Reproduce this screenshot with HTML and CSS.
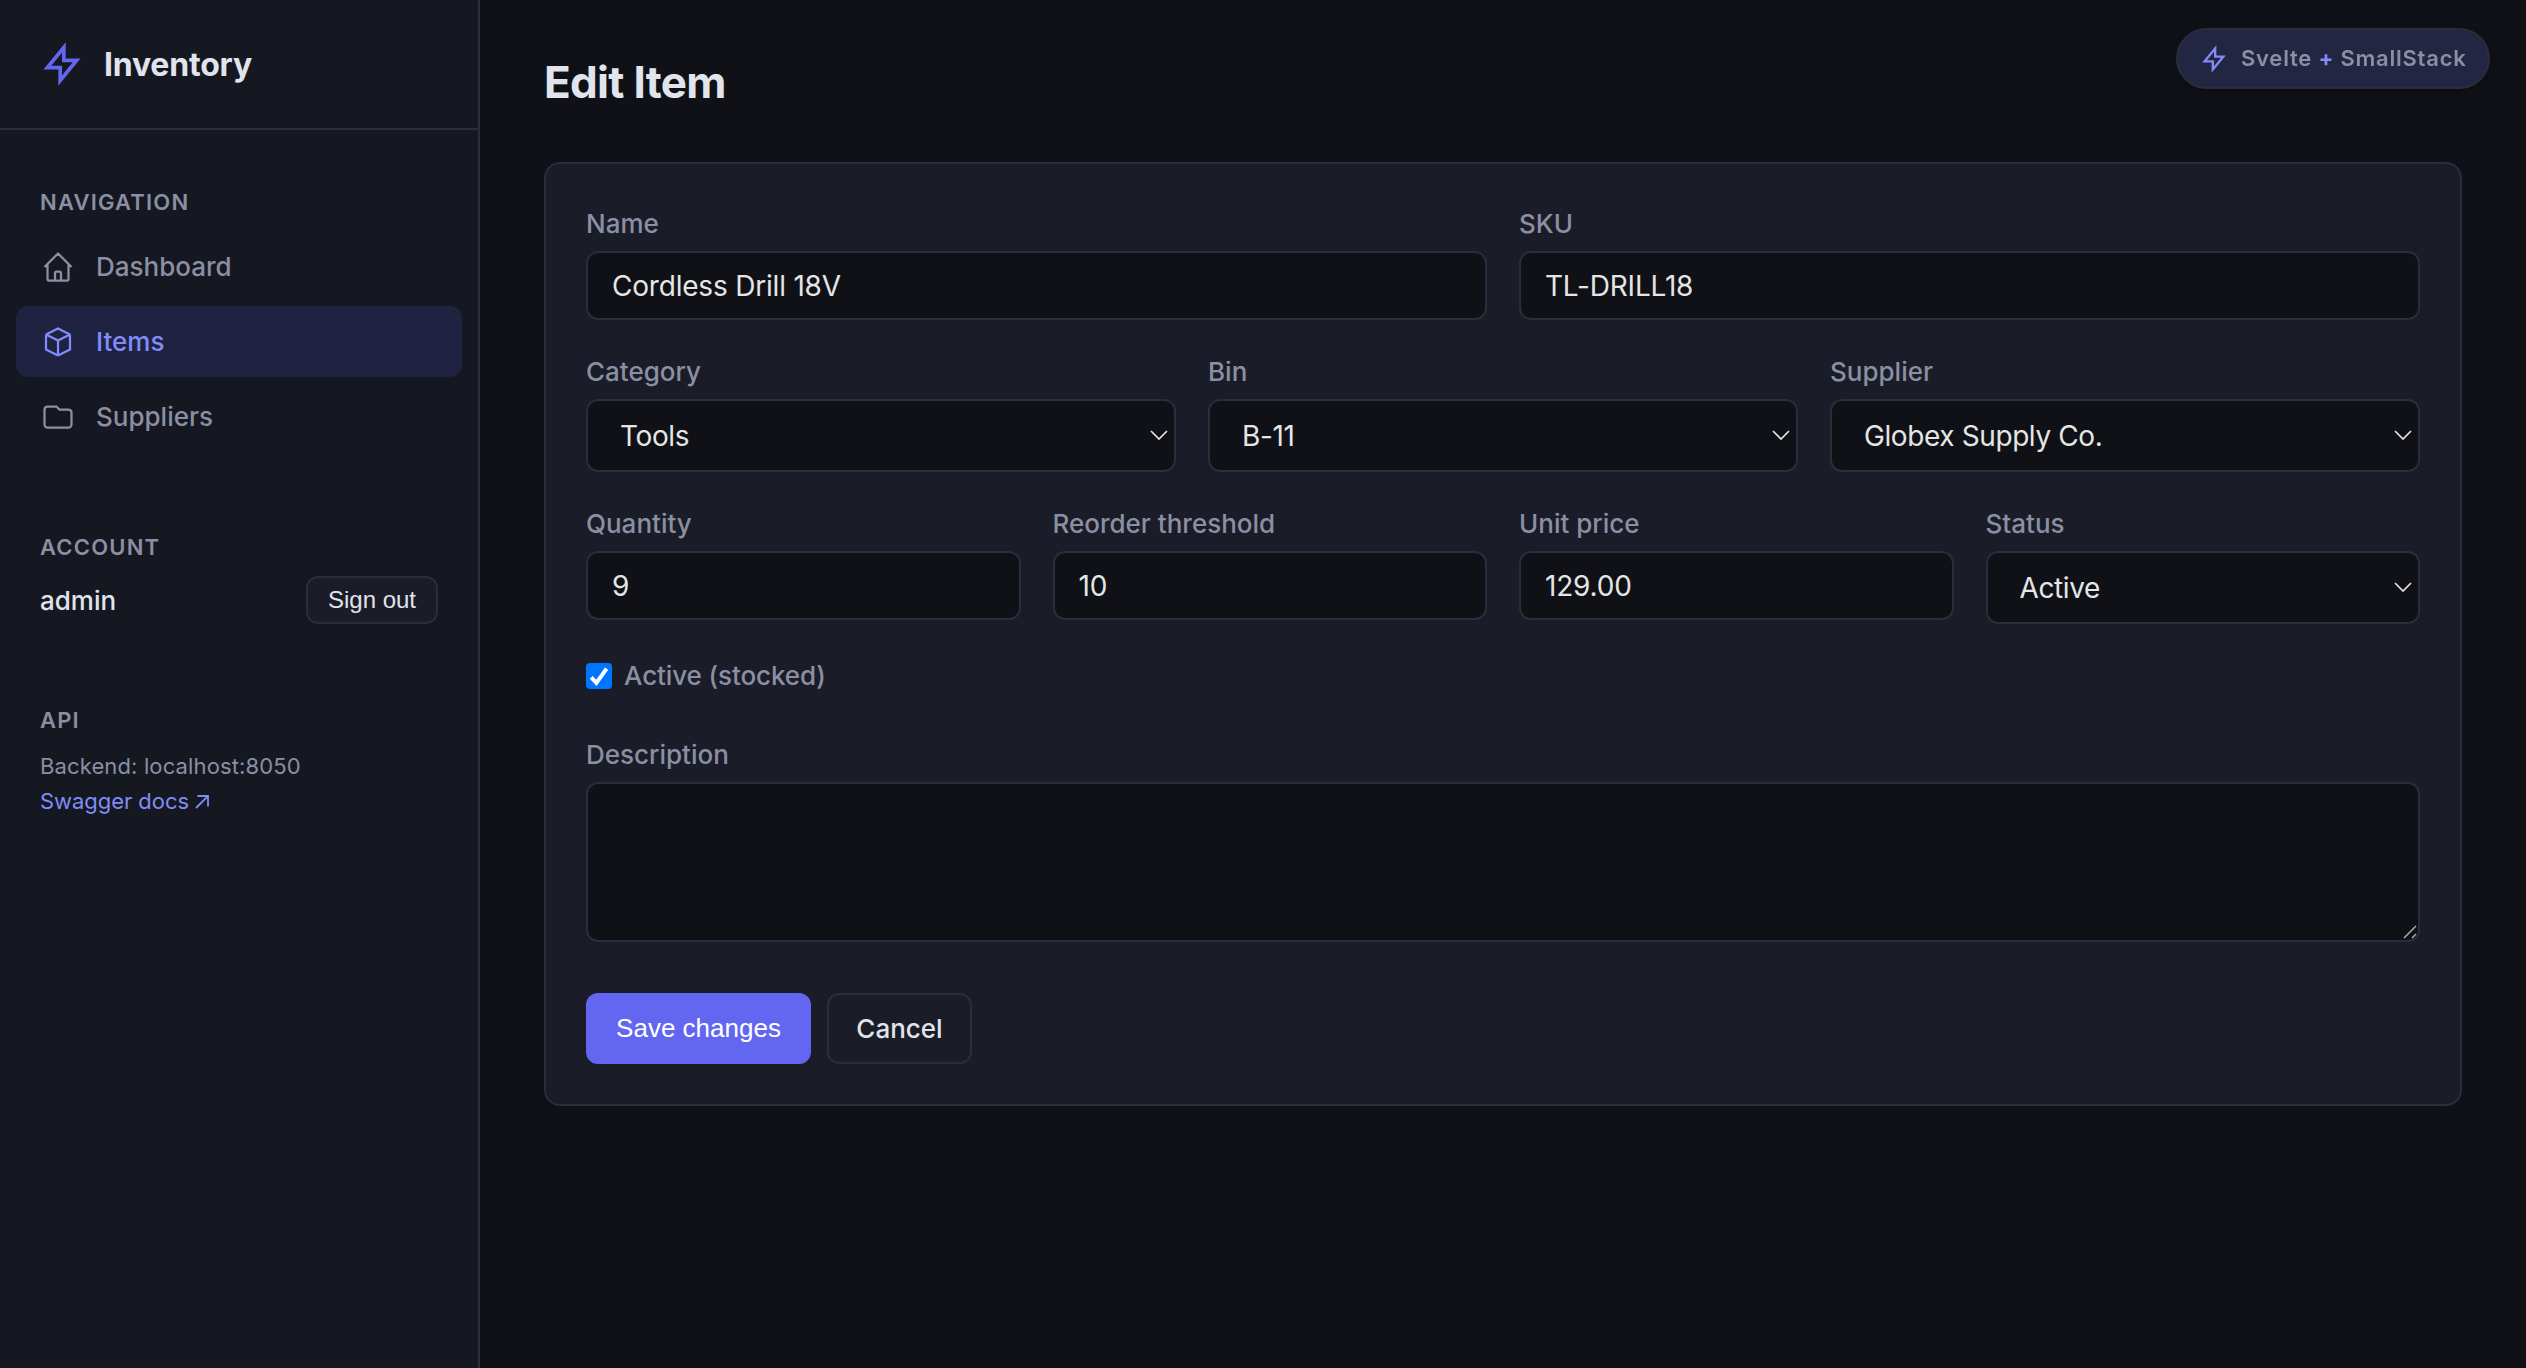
FILE: index.html
```html
<!DOCTYPE html>
<html lang="en">
  <head>
    <meta charset="UTF-8" />
    <meta name="viewport" content="width=device-width, initial-scale=1" />
    <title>Edit Item - Inventory</title>
    <link rel="stylesheet" href="styles.css">
  </head>
  <body>
    <!-- Sidebar -->
    <aside class="sidebar">
      <div class="sidebar-header">
        <svg class="logo-icon" viewBox="0 0 24 24" fill="none" stroke="currentColor" stroke-width="2">
          <path d="M13 10V3L4 14h7v7l9-11h-7z" />
        </svg>
        <span class="logo-text">Inventory</span>
      </div>

      <nav class="sidebar-section">
        <div class="section-label">Navigation</div>
        <a class="nav-item" href="#">
          <svg viewBox="0 0 24 24" fill="none" stroke="currentColor" stroke-width="1.5">
            <path d="M3 12l2-2m0 0l7-7 7 7M5 10v10a1 1 0 001 1h3m10-11l2 2m-2-2v10a1 1 0 01-1 1h-3m-6 0a1 1 0 001-1v-4a1 1 0 011-1h2a1 1 0 011 1v4a1 1 0 001 1m-6 0h6" />
          </svg>
          Dashboard
        </a>
        <a class="nav-item active" href="#">
          <svg viewBox="0 0 24 24" fill="none" stroke="currentColor" stroke-width="1.5">
            <path d="M20 7l-8-4-8 4m16 0l-8 4m8-4v10l-8 4m0-10L4 7m8 4v10M4 7v10l8 4" />
          </svg>
          Items
        </a>
        <a class="nav-item" href="#">
          <svg viewBox="0 0 24 24" fill="none" stroke="currentColor" stroke-width="1.5">
            <path d="M3 7v10a2 2 0 002 2h14a2 2 0 002-2V9a2 2 0 00-2-2h-6l-2-2H5a2 2 0 00-2 2z" />
          </svg>
          Suppliers
        </a>
      </nav>

      <div class="sidebar-section account">
        <div class="section-label">Account</div>
        <div class="account-row">
          <span class="username">admin</span>
          <button type="button" class="btn-small">Sign out</button>
        </div>
      </div>

      <div class="sidebar-section api">
        <div class="section-label">API</div>
        <div class="api-info">Backend: localhost:8050</div>
        <a class="api-link" href="#">Swagger docs
          <svg viewBox="0 0 14 14" fill="none" stroke="currentColor" stroke-width="1.8">
            <path d="M1 13L12.4 1.6M2.5 1h10.5v10.5" />
          </svg>
        </a>
      </div>
    </aside>

    <!-- Stack badge, top right -->
    <div class="stack-badge">
      <svg viewBox="0 0 24 24" fill="none" stroke="currentColor" stroke-width="2">
        <path d="M13 10V3L4 14h7v7l9-11h-7z" />
      </svg>
      <span>Svelte <b>+</b> SmallStack</span>
    </div>

    <!-- Edit form -->
    <main class="content">
      <h1>Edit Item</h1>

      <form class="card">
        <div class="form-row cols-2">
          <div class="field">
            <label for="name">Name</label>
            <input type="text" id="name" value="Cordless Drill 18V" />
          </div>
          <div class="field">
            <label for="sku">SKU</label>
            <input type="text" id="sku" value="TL-DRILL18" />
          </div>
        </div>

        <div class="form-row cols-3">
          <div class="field">
            <label for="category">Category</label>
            <div class="select">
              <select id="category"><option>Tools</option></select>
              <svg viewBox="0 0 18 10"><path d="M1 1l8 8 8-8" /></svg>
            </div>
          </div>
          <div class="field">
            <label for="bin">Bin</label>
            <div class="select">
              <select id="bin"><option>B-11</option></select>
              <svg viewBox="0 0 18 10"><path d="M1 1l8 8 8-8" /></svg>
            </div>
          </div>
          <div class="field">
            <label for="supplier">Supplier</label>
            <div class="select">
              <select id="supplier"><option>Globex Supply Co.</option></select>
              <svg viewBox="0 0 18 10"><path d="M1 1l8 8 8-8" /></svg>
            </div>
          </div>
        </div>

        <div class="form-row cols-4">
          <div class="field">
            <label for="quantity">Quantity</label>
            <input type="text" id="quantity" value="9" />
          </div>
          <div class="field">
            <label for="threshold">Reorder threshold</label>
            <input type="text" id="threshold" value="10" />
          </div>
          <div class="field">
            <label for="price">Unit price</label>
            <input type="text" id="price" value="129.00" />
          </div>
          <div class="field">
            <label for="status">Status</label>
            <div class="select">
              <select id="status"><option>Active</option></select>
              <svg viewBox="0 0 18 10"><path d="M1 1l8 8 8-8" /></svg>
            </div>
          </div>
        </div>

        <label class="checkbox">
          <input type="checkbox" checked />
          <svg viewBox="0 0 26 26"><path d="M5.2 14.4l5.2 5.4L20.6 5.6" /></svg>
          Active (stocked)
        </label>

        <div class="field description">
          <label for="description">Description</label>
          <div class="textarea">
            <textarea id="description"></textarea>
            <svg viewBox="0 0 14 14"><path d="M1 13L13 1M9 13l4-4" /></svg>
          </div>
        </div>

        <div class="actions">
          <button type="submit" class="btn btn-primary">Save changes</button>
          <a class="btn btn-secondary" href="#">Cancel</a>
        </div>
      </form>
    </main>
  </body>
</html>
```
FILE: styles.css
```css
:root {
  --bg: #0f1117;
  --sidebar: #151820;
  --surface: #1a1d27;
  --border: #2a2d3a;
  --text: #e1e4ed;
  --muted: #8b8fa3;
  --accent: #6366f1;
  --accent-light: #818cf8;
}
* {
  box-sizing: border-box;
}
body {
  margin: 0;
  min-height: 100vh;
  display: flex;
  background: var(--bg);
  color: var(--text);
  font-family: Inter, sans-serif;
  font-size: 26px;
  line-height: 1.5;
}
a {
  text-decoration: none;
}

/* Sidebar */
.sidebar {
  width: 480px;
  flex-shrink: 0;
  background: var(--sidebar);
  border-right: 2px solid var(--border);
}
.sidebar-header {
  display: flex;
  align-items: center;
  gap: 20px;
  height: 130px;
  padding: 0 40px;
  border-bottom: 2px solid var(--border);
}
.logo-icon {
  width: 44px;
  height: 44px;
  color: var(--accent);
  overflow: visible;
}
.logo-text {
  padding-top: 2px;
  font-size: 32px;
  font-weight: 700;
  letter-spacing: -0.2px;
}
.sidebar-section {
  padding: 56px 16px 0;
}
.section-label {
  padding: 0 24px;
  font-size: 22px;
  font-weight: 600;
  line-height: 33px;
  letter-spacing: 1.2px;
  text-transform: uppercase;
  color: var(--muted);
}
.nav-item {
  display: flex;
  align-items: center;
  gap: 20px;
  height: 71px;
  margin-bottom: 4px;
  padding: 0 24px;
  border-radius: 12px;
  color: var(--muted);
  font-weight: 500;
}
.nav-item svg {
  width: 36px;
  height: 36px;
}
.nav-item.active {
  background: #1f2240;
  color: var(--accent-light);
}
nav .section-label {
  margin-bottom: 12px;
}
.account {
  padding-top: 75px;
}
.account-row {
  display: flex;
  align-items: center;
  justify-content: space-between;
  margin-top: 12px;
  padding: 0 24px;
}
.username {
  font-weight: 500;
}
.btn-small {
  width: 132px;
  height: 48px;
  padding: 0;
  border: 2px solid var(--border);
  border-radius: 12px;
  background: var(--surface);
  color: var(--text);
  font: 24px "Liberation Sans", sans-serif;
}
.api {
  padding-top: 80px;
}
.api-info,
.api-link {
  display: block;
  padding: 0 24px;
  font-size: 22px;
  line-height: 35px;
  color: var(--muted);
  letter-spacing: 0.13px;
}
.api-info {
  margin-top: 12px;
}
.api-link {
  color: var(--accent-light);
  letter-spacing: -0.05px;
}
.api-link svg {
  width: 14px;
  height: 14px;
}

/* Badge */
.stack-badge {
  position: fixed;
  top: 28px;
  right: 36px;
  display: flex;
  align-items: center;
  gap: 13px;
  width: 314px;
  height: 61px;
  padding: 0 22px;
  border: 2px solid var(--border);
  border-radius: 31px;
  background: #232642;
  box-shadow: 0 2px 6px rgba(0, 0, 0, 0.3);
  color: var(--muted);
  font-size: 22px;
  font-weight: 600;
  letter-spacing: 0.77px;
  white-space: nowrap;
}
.stack-badge svg {
  width: 28px;
  height: 28px;
  overflow: visible;
  color: var(--accent-light);
}
.stack-badge b {
  font-weight: 700;
  color: var(--accent-light);
}

/* Content */
.content {
  flex: 1;
  padding: 48px 64px;
}
h1 {
  margin: 0 0 46px;
  font-size: 44px;
  font-weight: 700;
  line-height: 68px;
  letter-spacing: -0.7px;
}
.card {
  padding: 40px;
  border: 2px solid var(--border);
  border-radius: 16px;
  background: var(--surface);
}
.form-row {
  display: grid;
  align-items: start;
  gap: 32px;
  margin-bottom: 32px;
}
.cols-2 {
  grid-template-columns: repeat(2, 1fr);
}
.cols-3 {
  grid-template-columns: repeat(3, 1fr);
}
.cols-4 {
  grid-template-columns: repeat(4, 1fr);
}
.field {
  display: flex;
  flex-direction: column;
  gap: 8px;
}
label {
  font-weight: 500;
  color: var(--muted);
}
.field input,
select,
textarea {
  display: block;
  width: 100%;
  height: 69px;
  margin: 0;
  padding: 0 24px;
  border: 2px solid var(--border);
  border-radius: 12px;
  outline: none;
  background: var(--bg);
  color: #e5e5e5;
  font-family: inherit;
  font-size: 28px;
  letter-spacing: -0.2px;
}
.select,
.textarea,
.checkbox {
  position: relative;
}
select {
  height: 73px;
  padding: 0 32px;
  letter-spacing: -0.4px;
  appearance: none;
}
.select svg {
  position: absolute;
  top: 31px;
  right: 8px;
  width: 18px;
  height: 10px;
  fill: none;
  stroke: #e5e5e5;
  stroke-width: 1.7;
}
textarea {
  height: 160px;
  resize: none;
}
.textarea svg {
  position: absolute;
  right: 3px;
  bottom: 3px;
  width: 14px;
  height: 14px;
  fill: none;
  stroke: #a5a5a5;
  stroke-width: 1.6;
}
.checkbox {
  display: flex;
  align-items: center;
  gap: 12px;
  margin-bottom: 40px;
  letter-spacing: -0.1px;
}
.checkbox input {
  width: 26px;
  height: 26px;
  margin: 0;
  border-radius: 4px;
  background: #0075ff;
  appearance: none;
}
.checkbox svg {
  position: absolute;
  left: 0;
  width: 26px;
  height: 26px;
  fill: none;
  stroke: #fff;
  stroke-width: 4;
}
.actions {
  display: flex;
  gap: 16px;
  margin-top: 51px;
}
.btn {
  display: flex;
  align-items: center;
  justify-content: center;
  height: 71px;
  border: 2px solid transparent;
  border-radius: 12px;
  font-size: 26px;
}
.btn-primary {
  width: 225px;
  padding: 0;
  background: var(--accent);
  border-color: var(--accent);
  color: #fff;
  font-family: "Liberation Sans", sans-serif;
}
.btn-secondary {
  width: 145px;
  border-color: var(--border);
  color: var(--text);
  font-weight: 500;
}
```
